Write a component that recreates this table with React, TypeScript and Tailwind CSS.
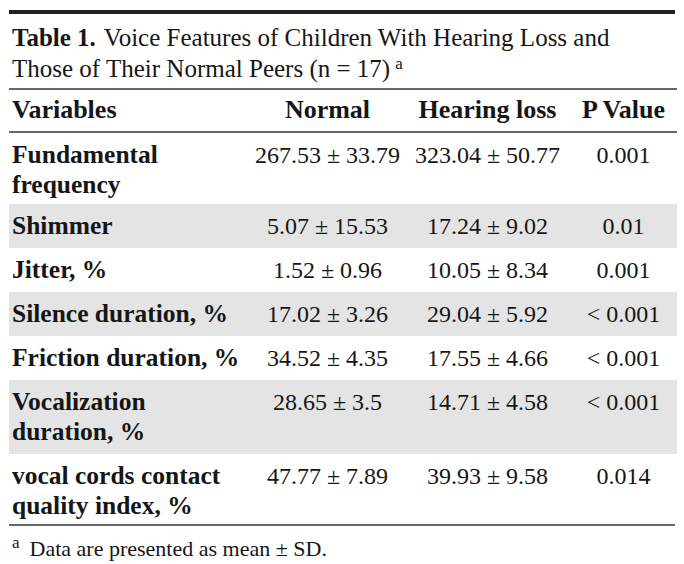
const rows = [
  { label: ["Fundamental", "frequency"], normal: "267.53 ± 33.79", hearing: "323.04 ± 50.77", p: "0.001", shade: false, pad: "pt-[7px] pb-[4px]" },
  { label: ["Shimmer"], normal: "5.07 ± 15.53", hearing: "17.24 ± 9.02", p: "0.01", shade: true, pad: "py-[7px]" },
  { label: ["Jitter, %"], normal: "1.52 ± 0.96", hearing: "10.05 ± 8.34", p: "0.001", shade: false, pad: "py-[7px]" },
  { label: ["Silence duration, %"], normal: "17.02 ± 3.26", hearing: "29.04 ± 5.92", p: "< 0.001", shade: true, pad: "py-[7px]" },
  { label: ["Friction duration, %"], normal: "34.52 ± 4.35", hearing: "17.55 ± 4.66", p: "< 0.001", shade: false, pad: "py-[7px]" },
  { label: ["Vocalization", "duration, %"], normal: "28.65 ± 3.5", hearing: "14.71 ± 4.58", p: "< 0.001", shade: true, pad: "py-[7px]" },
  { label: ["vocal cords contact", "quality index, %"], normal: "47.77 ± 7.89", hearing: "39.93 ± 9.58", p: "0.014", shade: false, pad: "pt-[7px] pb-[3px]" },
];

export default function App() {
  return (
    <div
      className="w-[684px] h-[564px] bg-white px-[9px] pt-[10px] text-[#161616]"
      style={{ fontFamily: '"Liberation Serif", "Times New Roman", serif' }}
    >
      <div className="border-t-4 border-[#222]" />
      <div className="pl-[3px] pt-[8px] pb-[4px] text-[25px] leading-[31px]">
        <p>
          <span className="font-bold">Table 1.</span>
          <span className="ml-[8px]">Voice Features of Children With Hearing Loss and</span>
        </p>
        <p>
          Those of Their Normal Peers (n = 17)
          <sup className="ml-[5px] text-[17px]">a</sup>
        </p>
      </div>

      <table className="w-[668px] table-fixed border-collapse text-[24px] leading-[30px]">
        <colgroup>
          <col className="w-[241px]" />
          <col className="w-[155px]" />
          <col className="w-[165px]" />
          <col className="w-[107px]" />
        </colgroup>
        <thead>
          <tr className="border-y-2 border-[#666] text-[26px]">
            <th className="pl-[3px] pt-[5px] pb-[6px] text-left font-bold">Variables</th>
            <th className="pt-[5px] pb-[6px] text-center font-bold">Normal</th>
            <th className="pt-[5px] pb-[6px] text-center font-bold">Hearing loss</th>
            <th className="pt-[5px] pb-[6px] text-center font-bold">P Value</th>
          </tr>
        </thead>
        <tbody>
          {rows.map((r) => (
            <tr key={r.label.join(" ")} className={r.shade ? "bg-[#e4e4e4]" : "bg-white"}>
              <td className={`${r.pad} pl-[3px] align-top text-[25.5px] font-bold`}>
                {r.label.map((l) => (
                  <div key={l}>{l}</div>
                ))}
              </td>
              <td className={`${r.pad} align-top text-center`}>{r.normal}</td>
              <td className={`${r.pad} align-top text-center`}>{r.hearing}</td>
              <td className={`${r.pad} align-top text-center`}>{r.p}</td>
            </tr>
          ))}
        </tbody>
      </table>
      <div className="border-t-2 border-[#666]" />
      <p className="pl-[3px] pt-[8px] text-[22px] leading-[30px]">
        <sup className="text-[17px]">a</sup>
        <span className="ml-[10px]">Data are presented as mean ± SD.</span>
      </p>
    </div>
  );
}
